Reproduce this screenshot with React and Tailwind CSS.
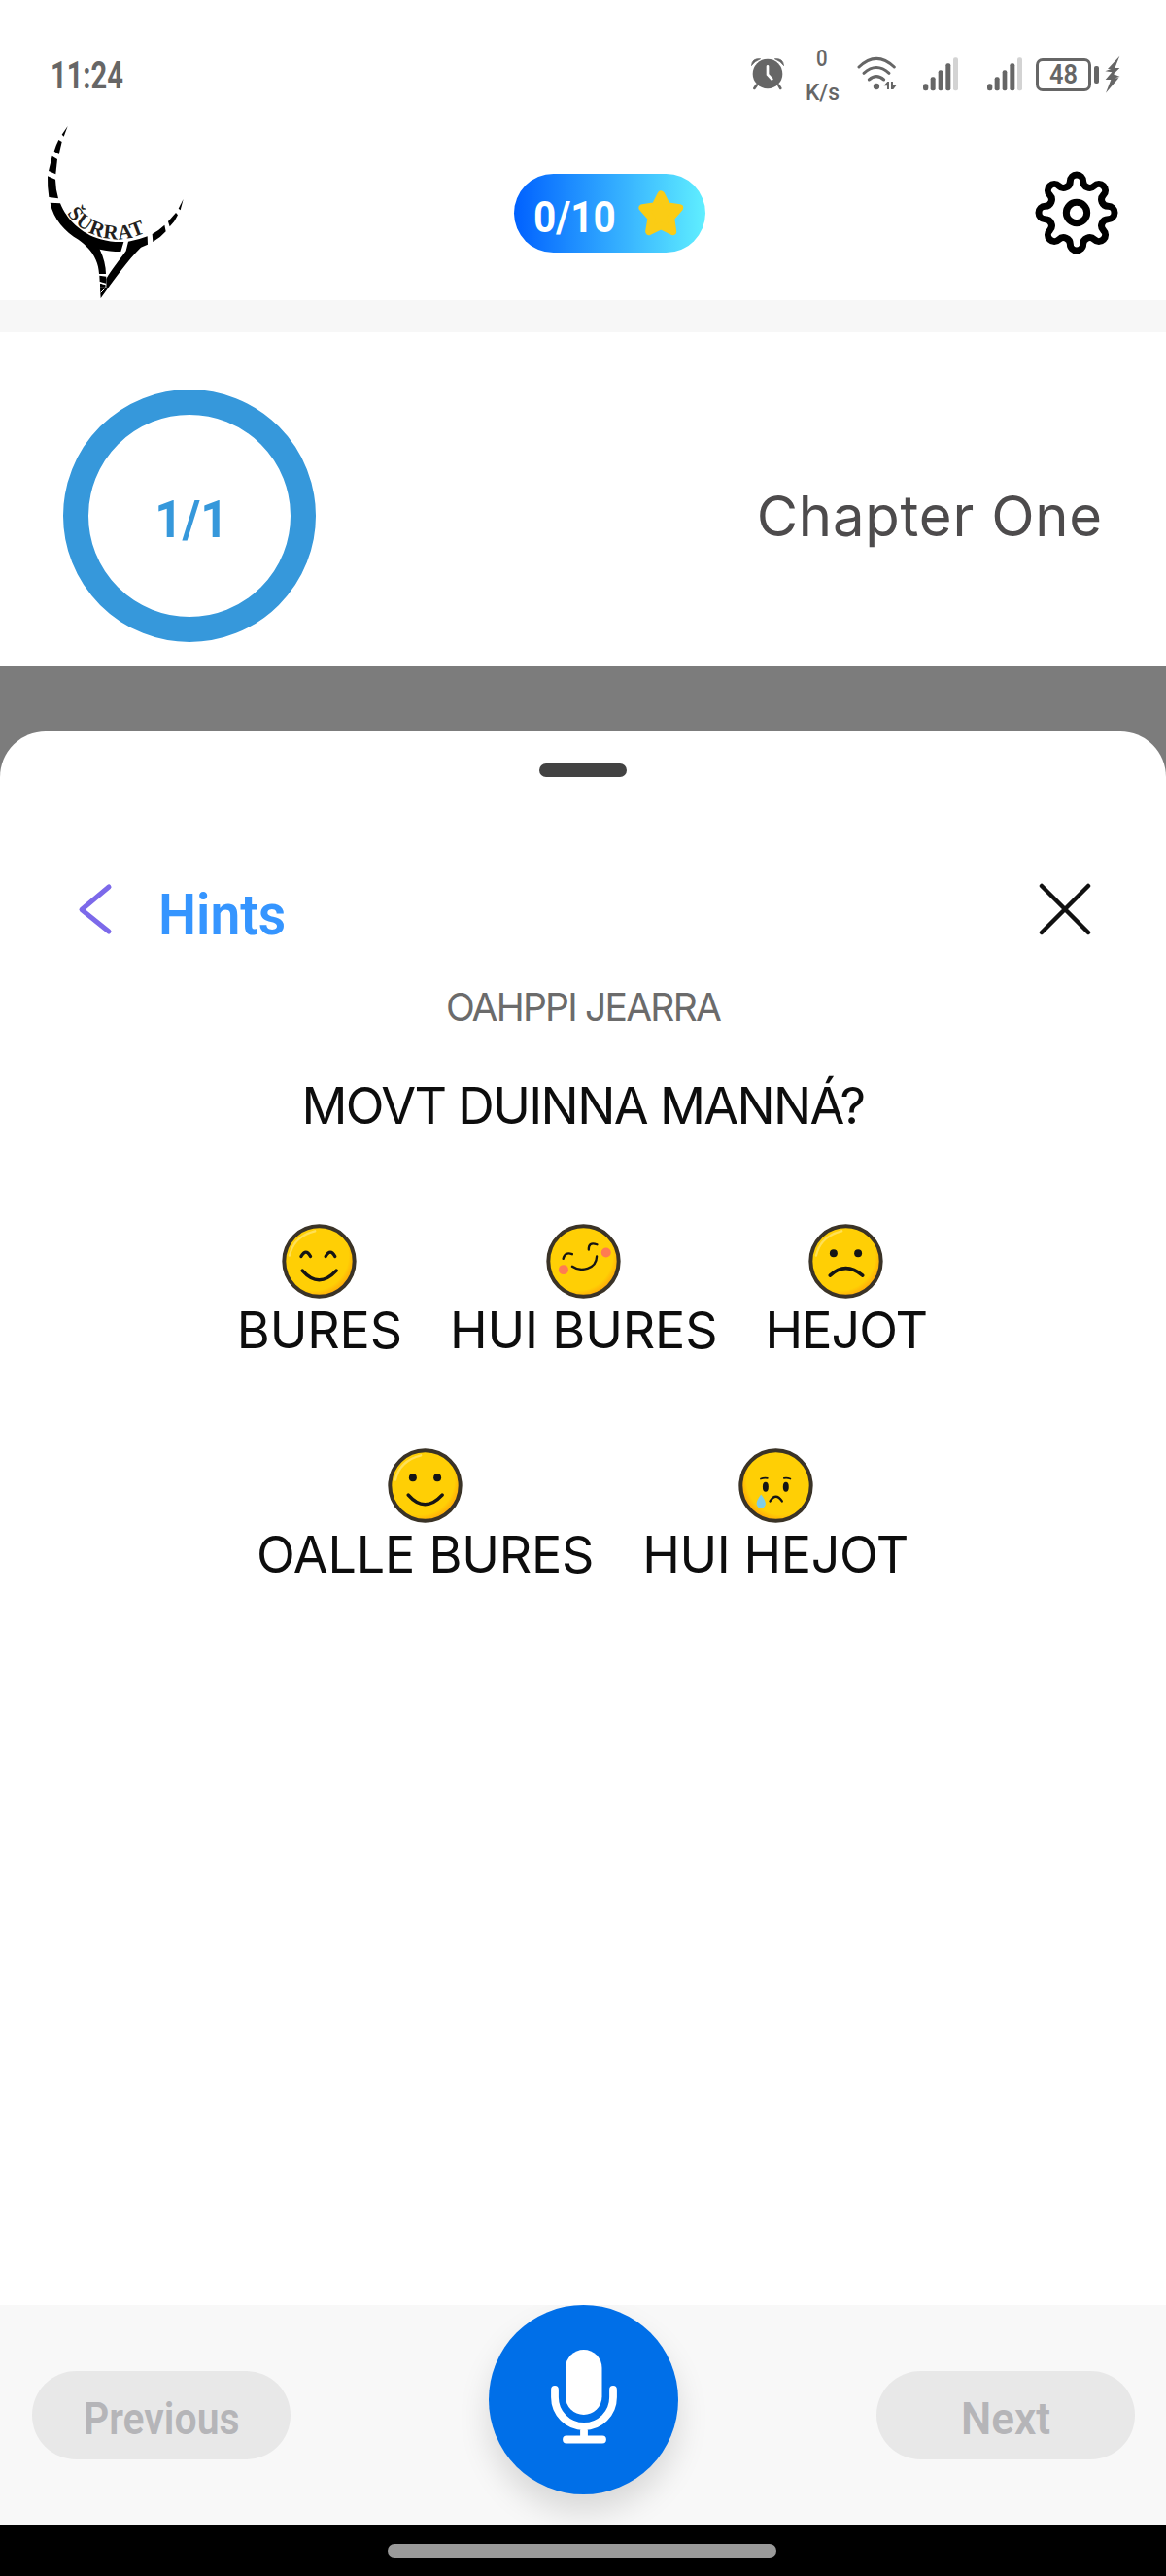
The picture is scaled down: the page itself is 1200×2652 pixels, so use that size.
const OUTLINE = "#151515";

function Logo() {
  return (
    <svg viewBox="120 285 480 555" className="block h-[185px] w-[160px]">
      <g fill="#000">
        <path d="M209 303 L191 329 L197 335 Z" />
        <path d="M181 345 L191 351 L182 390 L167 380 Q173 361 181 345 Z" />
        <path d="M161 395 L177 405 L172 451 L150 441 Z" />
        <path d="M147 457 L171 467 Q172 500 180 526 L151 522 Q146 490 147 457 Z" />
        <path d="M155 539 L186 541 C205 590 250 635 310 652 C338 660 360 661 382 660 L373 690 C350 690 328 688 308 683 C320 708 327 735 327 759 L306 759 C304 720 286 685 242 653 C200 628 165 590 155 539 Z" />
        <path d="M396 659 Q428 654 455 643 L456 668 L435 677 C395 715 350 780 311 834 L309 803 L328 800 L328 774 C345 745 372 712 389 688 Z" />
        <path d="M307 764 L328 767 L327 788 L308 783 Z M309 788 L326 792 L325 805 L309 800 Z" />
        <path d="M470 636 Q490 625 508 608 L512 628 Q495 648 472 660 Z" />
        <path d="M519 597 L543 570 L549 577 Q540 598 524 613 Z" />
        <path d="M566 528 L551 557 L557 562 Z" />
      </g>
      <path d="M309 786 L328 792 M310 802 L330 802 M311 817 L322 806" stroke="#fff" strokeWidth="3" fill="none" />
      <path id="logo-curve" d="M207 572 C240 622 300 652 362 652 C400 652 435 641 480 614" fill="none" />
      <text fill="#231f20" fontFamily="Liberation Serif" fontWeight="700" fontSize="63">
        <textPath href="#logo-curve" textLength="272" lengthAdjust="spacing">ŠURRAT</textPath>
      </text>
    </svg>
  );
}

function Bars() {
  return (
    <svg viewBox="0 0 108 104" className="block h-[34.7px] w-9">
      <g fill="#666">
        <rect x="0" y="82" width="16" height="21" rx="7" />
        <rect x="23" y="61" width="15" height="42" rx="6" />
        <rect x="47" y="40" width="14" height="63" rx="6" />
        <rect x="70" y="19" width="15" height="84" rx="6" />
      </g>
      <rect x="93" y="1" width="15" height="102" rx="6" fill="#d3d3d3" />
    </svg>
  );
}

function StatusBar() {
  return (
    <div className="flex h-[124px] items-start font-[Roboto] text-[#666]">
      <span className="ml-[52px] mt-[59px] w-[688px] origin-left scale-x-[0.765] text-[38px] leading-none font-bold">
        11:24
      </span>
      <svg viewBox="98 88 102 100" className="mt-[59.3px] ml-[33px] block h-[33.3px] w-[34px]">
        <circle cx="149" cy="139" r="46" fill="#666" />
        <path d="M99 114 Q101 90 127 93 Q108 101 99 114 Z M199 114 Q197 90 171 93 Q190 101 199 114 Z" fill="#666" stroke="#666" strokeWidth="2" strokeLinejoin="round" />
        <path d="M115 174 L108 184 M183 174 L189 184" stroke="#666" strokeWidth="8" strokeLinecap="round" />
        <path d="M149 116 V141 L162 155" stroke="#fff" strokeWidth="8" fill="none" strokeLinecap="round" />
      </svg>
      <div className="ml-[21px] mt-[48px] flex w-[36px] flex-col items-center text-[24px] leading-none font-medium">
        <span className="scale-x-[0.85]">0</span>
        <span className="mt-[11px] scale-x-[0.95]">K/s</span>
      </div>
      <svg viewBox="426 84 124 104" className="mt-[58px] ml-[18px] block h-[34.7px] w-[41.3px]">
        <g fill="none" stroke="#666" strokeWidth="9" strokeLinecap="round">
          <path d="M432 117 Q486 65 541 117" />
          <path d="M447 136 Q486 101 525 136" />
          <path d="M463 156 Q486 136 509 156" />
        </g>
        <circle cx="486" cy="177" r="9.500" fill="#666" />
        <path d="M509 175 L520 162 H525 V186 H519 V175 Z M531 162 H537 V172 H549 L538 186 H531 Z" fill="#666" />
      </svg>
      <div className="ml-[26.700px] mt-[59px]"><Bars /></div>
      <div className="ml-[30px] mt-[59px]"><Bars /></div>
      <div className="ml-[14px] mt-[60px] flex h-[34px] w-[57px] items-center justify-center rounded-[7px] border-[3px] border-[#666]">
        <span className="scale-x-[0.94] text-[27px] leading-none font-semibold">48</span>
      </div>
      <div className="ml-[3px] mt-[68px] h-[18px] w-[5px] rounded-[2px] bg-[#666]" />
      <svg viewBox="1190 80 48 118" className="ml-[6px] mt-[56.700px] block h-[39.300px] w-4">
        <path d="M1236 82 L1199 122 H1209 L1191 129 L1212 132 L1192 155 H1209 L1193 196 L1233 150 H1221 L1237 146 L1217 138 L1236 119 H1221 Z" fill="#666" />
      </svg>
    </div>
  );
}

/* Eight-lobed cog outline: one lobe and one valley, repeated every 45 degrees. */
const LOBE = [
  [-20, -97], [20, -97],
  [20, -88], [26, -81.2], [32.5, -78.5],
  [39, -75.8], [48.1, -76.4], [54.5, -82.8],
];
function cogPath() {
  let d = "";
  for (let i = 0; i < 8; i++) {
    const a = (i * Math.PI) / 4;
    const p = LOBE.map(([x, y]) =>
      `${(x * Math.cos(a) - y * Math.sin(a)).toFixed(2)} ${(x * Math.sin(a) + y * Math.cos(a)).toFixed(2)}`
    );
    if (i === 0) d += `M${p[0]}`;
    d += ` A20 20 0 0 1 ${p[1]} C${p[2]} ${p[3]} ${p[4]} C${p[5]} ${p[6]} ${p[7]}`;
  }
  return d + " Z";
}

function Gear() {
  return (
    <svg viewBox="-129 -129 258 258" className="block size-[86px]" fill="none" stroke="#000" strokeWidth="21" strokeLinejoin="round">
      <path d={cogPath()} />
      <circle r="32" />
    </svg>
  );
}

function Star() {
  return (
    <svg viewBox="470 108 140 140" className="block size-[46.700px]">
      <path
        d="M540 121 L558 156 L597 162 L570 193 L576 235 L540 217 L503 235 L510 193 L483 162 L522 156 Z"
        fill="#facc15" stroke="#facc15" strokeWidth="23" strokeLinejoin="round"
      />
    </svg>
  );
}

function Header() {
  return (
    <div className="flex h-[185px] items-start">
      <div className="ml-10 w-[489px]"><Logo /></div>
      <div className="mt-[55px] flex h-[81px] w-[197px] items-center rounded-full bg-[linear-gradient(90deg,#0061ff,#60efff)]">
        <span className="ml-[20px] mt-2 w-[108px] origin-left scale-x-[0.9] font-[Roboto] text-[45px] leading-none font-bold text-white">
          0/10
        </span>
        <Star />
      </div>
      <div className="ml-[339px] mt-[52px]"><Gear /></div>
    </div>
  );
}

const FACES = {
  happy: (
    <g fill="none" stroke={OUTLINE} strokeWidth="10" strokeLinecap="round">
      <path d="M57 98 Q72 71 86 98 M133 98 Q148 71 162 98" />
      <path d="M61 142 Q112 200 166 142" strokeWidth="11" />
    </g>
  ),
  blush: (
    <g>
      <circle cx="51" cy="139" r="15" fill="#ff7b52" />
      <circle cx="183" cy="86" r="15" fill="#ff7b52" />
      <g fill="none" stroke={OUTLINE} strokeWidth="7" strokeLinecap="round">
        <path d="M50 105 Q56 82 78 91" />
        <path d="M129 77 Q128 51 155 61" />
        <path d="M78 129 C105 148 153 137 154 98" />
      </g>
    </g>
  ),
  sad: (
    <g>
      <circle cx="75" cy="88" r="12" fill={OUTLINE} />
      <circle cx="151" cy="88" r="12" fill={OUTLINE} />
      <path d="M64 157 Q112 112 165 157" fill="none" stroke={OUTLINE} strokeWidth="11" strokeLinecap="round" />
    </g>
  ),
  smile: (
    <g>
      <circle cx="75" cy="88" r="12" fill={OUTLINE} />
      <circle cx="151" cy="88" r="12" fill={OUTLINE} />
      <path d="M61 142 Q112 200 166 142" fill="none" stroke={OUTLINE} strokeWidth="11" strokeLinecap="round" />
    </g>
  ),
  cry: (
    <g>
      <ellipse cx="81" cy="117" rx="9" ry="15" fill={OUTLINE} />
      <ellipse cx="144" cy="117" rx="9" ry="15" fill={OUTLINE} />
      <path d="M66 92 Q76 88 87 90 M138 90 Q148 88 158 92" fill="none" stroke={OUTLINE} strokeWidth="5" strokeLinecap="round" />
      <path d="M95 161 Q113 133 132 161" fill="none" stroke={OUTLINE} strokeWidth="7" strokeLinecap="round" />
      <path d="M67 140 Q53 158 53 169 A14 14 0 0 0 81 169 Q81 158 67 140 Z" fill="#7fcde8" />
    </g>
  ),
};

function Face({ kind }) {
  const shade = kind === "cry" ? "url(#shade-left)" : "url(#shade-right)";
  return (
    <svg viewBox="-3 -3 232 232" className="block size-[77px]">
      <defs>
        <radialGradient id="shade-right" cx="0.42" cy="0.42" r="0.62">
          <stop offset="0.8" stopColor="#ffcf05" />
          <stop offset="1" stopColor="#ff9f0a" />
        </radialGradient>
        <radialGradient id="shade-left" cx="0.58" cy="0.42" r="0.62">
          <stop offset="0.8" stopColor="#ffcf05" />
          <stop offset="1" stopColor="#ff9f0a" />
        </radialGradient>
      </defs>
      <circle cx="113" cy="113" r="109" fill={shade} stroke="#3a3327" strokeWidth="12" />
      {kind !== "cry" && kind !== "blush" && (
        <path d="M21 95 Q34 36 100 19" fill="none" stroke="#ffe36b" strokeWidth="7" strokeLinecap="round" opacity="0.8" />
      )}
      {FACES[kind]}
    </svg>
  );
}

function Option({ kind, label, tracking }) {
  return (
    <div className="flex flex-col items-center">
      <Face kind={kind} />
      <span className={`mt-[7px] text-[52px] leading-none whitespace-nowrap ${tracking}`}>{label}</span>
    </div>
  );
}

function PillButton({ children }) {
  return (
    <div className="flex h-[91px] w-[266px] items-center justify-center rounded-full bg-[#e8e8e8] font-[Roboto] text-[46px] leading-none font-semibold text-[#b5b5b8]">
      {children}
    </div>
  );
}

function Mic() {
  return (
    <svg viewBox="0 0 68 98" className="mb-[7px] block h-[98px] w-[68px]">
      <rect x="15" y="1" width="37.500" height="67" rx="18.750" fill="#fff" />
      <path d="M4 42 V50 A30 30 0 0 0 64 50 V42 M34 80 V93 M16 93.500 H53" fill="none" stroke="#fff" strokeWidth="7.800" strokeLinecap="round" />
    </svg>
  );
}

export default function App() {
  return (
    <div className="flex h-[2652px] w-[1200px] flex-col overflow-hidden bg-white font-[Inter]">
      <StatusBar />
      <Header />
      <div className="h-[33px] bg-[#f7f7f7]" />
      <div className="flex h-[344px] items-start justify-between pr-[65px] pl-[65px]">
        <div className="mt-[59px] flex size-[260px] items-center justify-center rounded-full border-[26px] border-[#3698db]">
          <span className="mt-2 ml-[4px] scale-x-[0.92] font-[Roboto] text-[54px] leading-none font-bold text-[#3698db]">1/1</span>
        </div>
        <span className="mt-[160px] text-[58px] leading-none tracking-[0.8px] text-[#4d4b4c]">Chapter One</span>
      </div>
      <div className="flex h-[1687px] flex-col bg-[#7c7c7c] pt-[67px]">
        <div className="flex flex-1 flex-col items-center rounded-t-[47px] bg-white text-[#0d0d0d]">
          <div className="mt-[33px] h-[13.500px] w-[90px] rounded-full bg-[#424242]" />
          <div className="mt-[108px] flex h-[56px] w-full items-center pr-[77px] pl-[80px]">
            <svg viewBox="0 0 36 54" className="block h-[54px] w-9" fill="none" stroke="#7c69ea" strokeWidth="5" strokeLinecap="round" strokeLinejoin="round">
              <path d="M32 4 L4 27.500 L32 50" />
            </svg>
            <span className="mt-[12px] ml-[47px] origin-left scale-x-[0.92] font-[Roboto] text-[60px] leading-none font-semibold text-[#3595ff]">
              Hints
            </span>
            <svg viewBox="0 0 54 54" className="ml-auto block size-[54px]" fill="none" stroke="#111" strokeWidth="4.500" strokeLinecap="round">
              <path d="M3 3 L51 51 M51 3 L3 51" />
            </svg>
          </div>
          <p className="mt-[53px] text-[39px] leading-none tracking-[-1.78px] text-[#6b6b6b]">OAHPPI JEARRA</p>
          <h1 className="mt-[57px] text-[52px] leading-none tracking-[-1.64px]">MOVT DUINNA MANNÁ?</h1>
          <div className="mt-[95px] mr-[2px] flex gap-[49px]">
            <Option kind="happy" label="BURES" tracking="tracking-[-0.1px]" />
            <Option kind="blush" label="HUI BURES" tracking="tracking-[-0.15px]" />
            <Option kind="sad" label="HEJOT" tracking="tracking-[-0.9px]" />
          </div>
          <div className="mt-[95px] mr-[1px] flex gap-[50px]">
            <Option kind="smile" label="OALLE BURES" tracking="tracking-[-0.2px]" />
            <Option kind="cry" label="HUI HEJOT" tracking="tracking-[-0.4px]" />
          </div>
        </div>
      </div>
      <div className="flex h-[227px] items-start justify-between overflow-hidden bg-[#f8f8f8] pr-[32px] pl-[33px]">
        <div className="mt-[68px]">
          <PillButton><span className="mt-1.5 scale-x-[0.89]">Previous</span></PillButton>
        </div>
        <div className="flex size-[195px] items-center justify-center rounded-full bg-[#006fe8] shadow-[0_18px_32px_rgba(0,0,0,0.13)]">
          <Mic />
        </div>
        <div className="mt-[68px]">
          <PillButton><span className="mt-1.5 scale-x-[0.96]">Next</span></PillButton>
        </div>
      </div>
      <div className="flex h-[52px] justify-center bg-black pt-[19px] pr-[2px]">
        <div className="h-[14px] w-[400px] rounded-full bg-[#999]" />
      </div>
    </div>
  );
}
